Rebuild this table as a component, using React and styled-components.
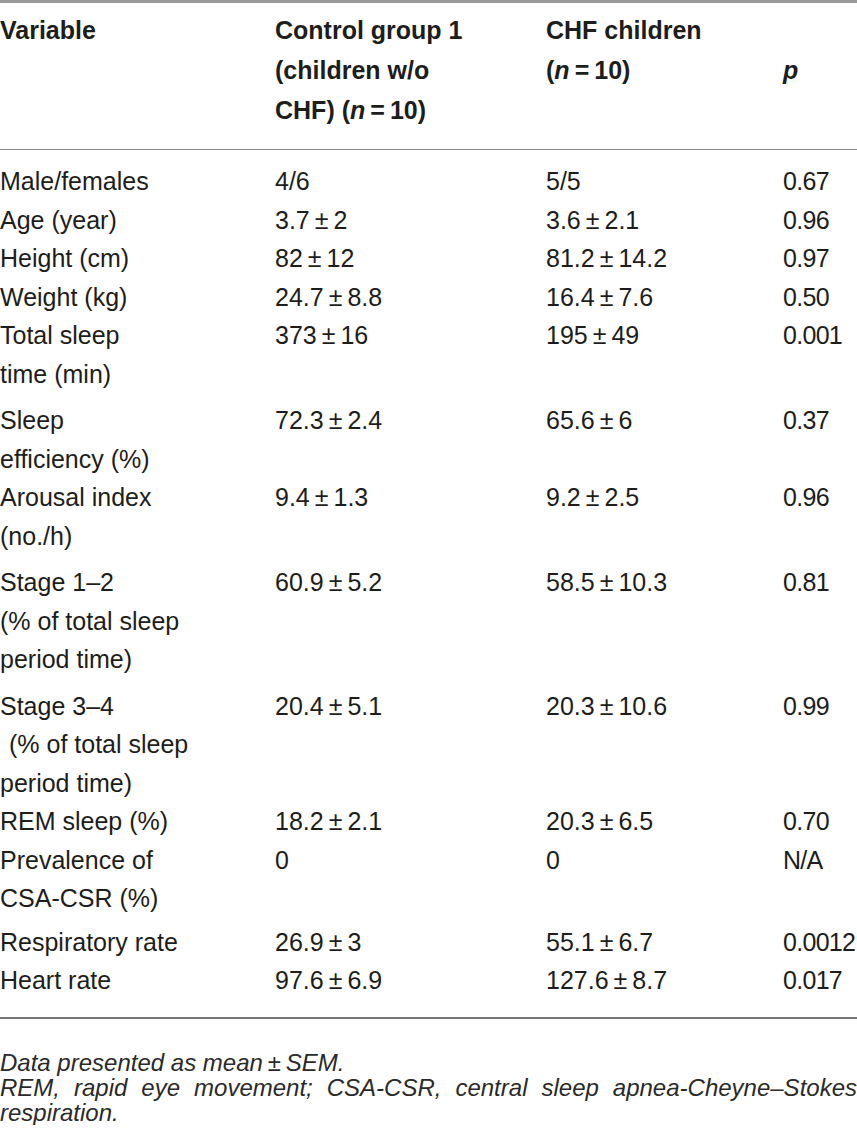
import React from "react";
import styled, { createGlobalStyle } from "styled-components";

const Global = createGlobalStyle`
  html, body { margin: 0; padding: 0; background: #fff; }
  body { font-family: "Liberation Sans", Arial, sans-serif; color: #1d1d1b; }
`;

const Table = styled.div`
  width: 857px;
  border-top: 3px solid #9a9a9a;
`;

const Grid = styled.div`
  display: grid;
  grid-template-columns: 275px 271px 237px 74px;
`;

const HeaderRow = styled(Grid)`
  padding: 7px 0 19px;
  border-bottom: 1px solid #8a8a8a;
  font-size: 25px;
  line-height: 40px;
  font-weight: 700;
`;

const HeadCell = styled.div`
  align-self: ${(p) => (p.$center ? "center" : "start")};
  white-space: nowrap;
`;

const Body = styled.div`
  padding: 12px 0 17px;
`;

const Row = styled(Grid)`
  margin-top: ${(p) => p.$gap || 0}px;
  font-size: 25px;
  line-height: 38.5px;
`;

const Cell = styled.div`
  white-space: nowrap;
  letter-spacing: ${(p) => (p.$tight ? "-0.7px" : "normal")};
`;

const Line = styled.div`
  padding-left: ${(p) => (p.$indent ? 9 : 0)}px;
`;

const Footer = styled.div`
  border-top: 2px solid #777;
  padding-top: 31px;
  font-style: italic;
  font-size: 24px;
  line-height: 25px;
  color: #2a2a2a;
`;

const Note = styled.p`
  margin: 0;
  text-align: ${(p) => (p.$justify ? "justify" : "left")};
`;

const T = "\u2009";
const pm = (a, b) => `${a}${T}±${T}${b}`;

const rows = [
  { v: ["Male/females"], a: "4/6", b: "5/5", p: "0.67" },
  { v: ["Age (year)"], a: pm("3.7", "2"), b: pm("3.6", "2.1"), p: "0.96" },
  { v: ["Height (cm)"], a: pm("82", "12"), b: pm("81.2", "14.2"), p: "0.97" },
  { v: ["Weight (kg)"], a: pm("24.7", "8.8"), b: pm("16.4", "7.6"), p: "0.50" },
  { v: ["Total sleep", "time (min)"], a: pm("373", "16"), b: pm("195", "49"), p: "0.001" },
  { v: ["Sleep", "efficiency (%)"], a: pm("72.3", "2.4"), b: pm("65.6", "6"), p: "0.37", gap: 8 },
  { v: ["Arousal index", "(no./h)"], a: pm("9.4", "1.3"), b: pm("9.2", "2.5"), p: "0.96" },
  { v: ["Stage 1–2", "(% of total sleep", "period time)"], a: pm("60.9", "5.2"), b: pm("58.5", "10.3"), p: "0.81", gap: 8 },
  { v: ["Stage 3–4", " (% of total sleep", "period time)"], a: pm("20.4", "5.1"), b: pm("20.3", "10.6"), p: "0.99", gap: 8 },
  { v: ["REM sleep (%)"], a: pm("18.2", "2.1"), b: pm("20.3", "6.5"), p: "0.70" },
  { v: ["Prevalence of", "CSA-CSR (%)"], a: "0", b: "0", p: "N/A" },
  { v: ["Respiratory rate"], a: pm("26.9", "3"), b: pm("55.1", "6.7"), p: "0.0012", gap: 5 },
  { v: ["Heart rate"], a: pm("97.6", "6.9"), b: pm("127.6", "8.7"), p: "0.017" },
];

export default function App() {
  return (
    <>
      <Global />
      <Table>
        <HeaderRow>
          <HeadCell>Variable</HeadCell>
          <HeadCell>
            Control group 1
            <br />
            (children w/o
            <br />
            CHF) (<i>n</i>
            {T}={T}10)
          </HeadCell>
          <HeadCell>
            CHF children
            <br />
            (<i>n</i>
            {T}={T}10)
          </HeadCell>
          <HeadCell $center>
            <i>p</i>
          </HeadCell>
        </HeaderRow>
        <Body>
          {rows.map((r, i) => (
            <Row key={i} $gap={r.gap}>
              <Cell>
                {r.v.map((l, j) => (
                  <Line key={j} $indent={l.startsWith(" ")}>
                    {l.trim()}
                  </Line>
                ))}
              </Cell>
              <Cell>{r.a}</Cell>
              <Cell>{r.b}</Cell>
              <Cell $tight>{r.p}</Cell>
            </Row>
          ))}
        </Body>
        <Footer>
          <Note>Data presented as mean{T}±{T}SEM.</Note>
          <Note $justify>
            REM, rapid eye movement; CSA-CSR, central sleep apnea-Cheyne–Stokes
            respiration.
          </Note>
        </Footer>
      </Table>
    </>
  );
}
